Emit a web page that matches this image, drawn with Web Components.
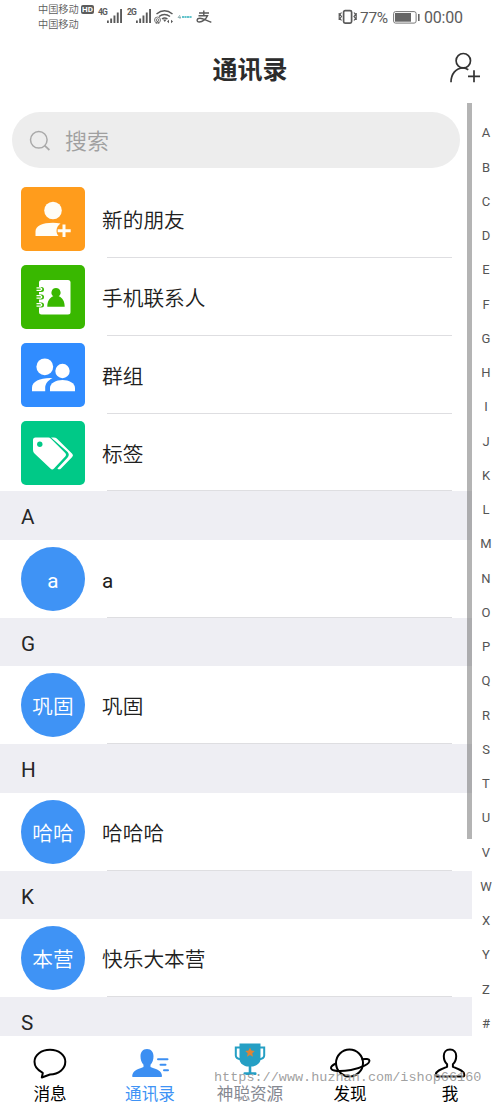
<!DOCTYPE html>
<html lang="zh-CN">
<head>
<meta charset="utf-8">
<title>通讯录</title>
<style>
html,body{margin:0;padding:0;background:#fff}
body{font-family:Roboto,"Noto Sans CJK SC",sans-serif;color:#262626}
</style>
</head>
<body>
<contacts-app></contacts-app>
<script>
const define = (name, html, setup) => {
  const template = document.createElement('template');
  template.innerHTML = html;
  customElements.define(name, class extends HTMLElement {
    connectedCallback() {
      if (this.shadowRoot) return;
      const root = this.attachShadow({ mode: 'open' });
      root.append(template.content.cloneNode(true));
      if (setup) setup(this, root);
    }
  });
};

/* name: [width, height, markup] */
const ICONS = {
  signal: [16, 15, '<g fill="#5a5a5a"><rect x="0" y="11.500" width="1.800" height="2.500"/><rect x="3.200" y="9.500" width="1.900" height="4.500"/><rect x="6.500" y="6.500" width="1.900" height="7.500"/><rect x="9.800" y="3.500" width="1.900" height="10.500"/><rect x="13.100" y="0" width="1.900" height="14"/></g>'],
  wifi: [20, 16, '<g fill="none" stroke="#5a5a5a" stroke-width="1.500"><path d="M2.500 5Q10.500-1.500 18.500 5"/><path d="M5 7.500Q10.500 3.300 16 7.500"/><path d="M8 10Q10.500 8 13.500 10"/><g stroke-width=".8"><circle cx="3.500" cy="11" r="3"/><circle cx="3.500" cy="11" r="1.300"/><path d="M2 15l1.500-3 1.500 3"/></g></g><path d="M9 10.500h3.500l-1.700 2.500z" fill="#5a5a5a"/><path d="M13 12.500l2-1.700v3.400zM19 12.500l-2-1.700v3.400z" fill="#5a5a5a"/>'],
  carrier: [16, 6, '<path d="M3 1L1 3.500h3M3 2v3" stroke="#86a8aa" fill="none" stroke-width=".8"/><path d="M5 3h10" stroke="#62c4cc" stroke-width="2.200" stroke-dasharray="2.100 .4"/>'],
  alipay: [16, 14, '<g fill="none" stroke="#5a5a5a" stroke-width="1.400"><path d="M3 3h10M7.800 .5v5M2.500 5.700h9C10 9 6.500 12 3.300 12 .2 12 .4 8.300 4 8.300c3.500 0 7 3 11.300 4"/></g>'],
  vibrate: [19, 16, '<g fill="none" stroke="#5a5a5a"><rect x="5.600" y="1.600" width="8" height="12.500" rx="1.500" stroke-width="1.700"/><path d="M3.500 3.500l-1.500 2 1.500 2-1.500 2 1.500 2M1.200 4v7M16 3.500l1.500 2-1.500 2 1.500 2-1.500 2M18.200 4v7" stroke-width="1.200"/></g>'],
  battery: [27, 13, '<rect x=".6" y=".6" width="22.500" height="11.500" rx="2" fill="none" stroke="#777"/><rect x="2" y="2" width="16" height="8.700" fill="#666"/><rect x="25" y="3" width="1.600" height="7" fill="#666"/>'],
  addUser: [32, 32, '<g fill="none" stroke="#333" stroke-width="1.700"><circle cx="14.300" cy="8.700" r="7.200"/><path d="M2 30.300c0-8 4.500-14.300 12.300-14.300q2.500 0 5 1.700M25 18.200v12M19 24.300h12"/></g>'],
  search: [22, 22, '<g fill="none" stroke="#a9a9a9" stroke-width="1.500"><circle cx="9.800" cy="9.800" r="8.300"/><path d="M15.700 15.700l4.700 4.300" stroke-width="1.700"/></g>'],
  friend: [64, 64, '<g fill="#fffdf6"><ellipse cx="32" cy="23.500" rx="8.800" ry="8.700"/><path d="M14.500 49v-4.500c0-6 7-8.800 17.500-8.800q3.500 0 7.500 .8c-5 3.500-4.800 9.500-2 12.500z"/><path d="M41.500 37.500h3v4.800h5.200v3h-5.200v4.800h-3v-4.800h-4.800v-3h4.800z"/></g>'],
  phonebook: [64, 64, '<rect x="18" y="15" width="31.500" height="34.500" rx="2.500" fill="#fff"/><g><rect x="13" y="22" width="10" height="5" rx="2.500" fill="#39b800"/><rect x="13" y="29.500" width="10" height="5" rx="2.500" fill="#39b800"/><rect x="13" y="37.500" width="10" height="5" rx="2.500" fill="#39b800"/><path d="M15.500 22.800h4q2.500 1.300 0 2.600h-4M15.500 30.600h4q2.500 1.300 0 2.600h-4M15.500 38.600h4q2.500 1.300 0 2.600h-4" fill="none" stroke="#fff" stroke-width="1.300"/></g><path d="M35 23a4.600 4.600 0 0 1 2.700 8.300c3.700 1.300 6 5 6 10.500H26.300c0-5.500 2.300-9.200 6-10.500A4.600 4.600 0 0 1 35 23z" fill="#39b800"/>'],
  group: [64, 64, '<g fill="#fff"><circle cx="23.800" cy="23.800" r="8.400"/><circle cx="41.500" cy="28" r="7.200"/><path d="M11 48.300v-3.500c0-6.300 8-9.800 18-9.800h2.500c-5 2.800-7.300 6-7.300 10v3.300z"/><path d="M29 48.300V45c0-5 6-8 12.500-8s12.500 3 12.500 8v3.300z"/></g>'],
  tags: [64, 64, '<g fill="#fff"><path d="M14.500 16.500H27.500q1.200 0 2.200 1L44 31.800q2 2 0 4L33 47.600q-1.800 1.700-3.600 0L13.500 32.500Q12 31 12 29v-10q0-2.500 2.500-2.500z"/><path d="M30 16.500h2.800q2 0 3 1L51.200 32.800q1.600 1.600 0 3.200L40 47.500q-1.800 1.700-3.600 0l10-10.800q2.700-3 .2-5.800z"/></g><circle cx="18.800" cy="23.200" r="2.700" fill="#00c987"/>'],
  message: [40, 36, '<path d="M12 27.300C7.500 25 4.500 21.300 4.500 16.800 4.500 9.800 11.300 4.800 20 4.800s15.300 5 15.300 12-6.500 12.700-15.300 12.700l-8.200 3 1-4.500z" fill="none" stroke="#000" stroke-width="2" stroke-linejoin="round"/>'],
  contacts: [40, 36, '<path d="M17 4c4.500 0 6.500 3.300 6.500 7.300 0 3.500-1 6.500-3 8.500v2.200c7 2.500 11.300 3.700 11.500 9 0 .7-.5 1-1.200 1H3.300c-.7 0-1.200-.3-1.100-1 .5-5.300 4.500-6.500 11.300-9v-2.200c-2-2-3-5-3-8.500C10.500 7.300 12.500 4 17 4z" fill="#3c8ff2"/><path d="M28 14.300h9.500M30.500 19.800h5M34 25.300h4" stroke="#3c8ff2" stroke-width="2" stroke-linecap="round"/>'],
  trophy: [40, 36, '<path d="M11 2.500H5.800v8c0 2.500 1.700 3.400 5.200 3.700M29 2.500h5.200v8c0 2.500-1.700 3.400-5.200 3.700" fill="none" stroke="#259fc4" stroke-width="2"/><path d="M9.500-1.500h21v16c0 3.800-4.500 6.300-7.500 7H17c-3-.7-7.500-3.200-7.500-7z" fill="#259fc4"/><path d="M18.700 20h2.600v8h-2.600z" fill="#259fc4"/><rect x="13.500" y="27.300" width="13" height="2.700" rx="1" fill="#259fc4"/><path d="M20 2.500l1.400 3.100 3.400.4-2.500 2.300.7 3.400-3-1.700-3 1.700.7-3.400L15.200 6l3.400-.4z" fill="#dd8437"/>'],
  planet: [44, 36, '<g fill="none" stroke="#000" stroke-width="2"><circle cx="21.500" cy="18" r="13.500"/><path d="M33.500 14.300c4.500-.8 7.700-.3 7.900 1.200.4 3.200-7.400 7.500-18.400 9.400-11 1.900-19.600 1.300-20-1.700-.2-1.700 1.600-3.200 5-4.700"/></g>'],
  me: [40, 36, '<path d="M20 4.500c4 0 6.200 2.800 6.200 6.500 0 3.700-1.300 6.500-3.300 8.300v2.500c6 2.400 10.800 4 11.300 7.500.3 1.700-.2 2.200-1.200 2.200H7c-1 0-1.500-.5-1.200-2.200.5-3.500 5.300-5.100 11.300-7.500v-2.500c-2-1.800-3.300-4.600-3.300-8.300 0-3.700 2.200-6.500 6.200-6.500z" fill="none" stroke="#000" stroke-width="2" stroke-linejoin="round"/>']
};

define('ui-icon', '<style>:host{display:block;flex:none}svg{display:block;overflow:visible}</style><div></div>', (host, root) => {
  const [w, h, body] = ICONS[host.getAttribute('name')];
  root.querySelector('div').innerHTML = `<svg width="${w}" height="${h}" viewBox="0 0 ${w} ${h}">${body}</svg>`;
});

define('status-bar', `<style>
:host{display:flex;height:34px;box-sizing:border-box;padding:0 37px 0 38px;color:#5c5c5c;align-items:flex-start}
.sim{display:grid;grid-template-rows:15px 15px;padding-top:2px;width:40px;font-size:10.200px;line-height:15px;white-space:nowrap;font-weight:350}
.hd{background:#5c5c5c;color:#fff;font:bold 8px/9px Roboto,sans-serif;width:13px;height:9px;border-radius:2px;text-align:center;margin:5px 0 0 3px}
.net{font:bold 8.500px/9px Roboto,sans-serif;letter-spacing:-.8px;margin:8px 0 0 4px;width:9px}
.n2{margin-left:4px}
.right{display:flex;margin-left:auto;font-size:16px;line-height:20px}
</style>
<div class="sim"><span>中国移动</span><span>中国移动</span></div><span class="hd">HD</span>
<span class="net">4G</span><ui-icon name="signal" style="margin-top:9px"></ui-icon>
<span class="net n2">2G</span><ui-icon name="signal" style="margin-top:9px"></ui-icon>
<ui-icon name="wifi" style="margin:9px 0 0 2px"></ui-icon><ui-icon name="carrier" style="margin:14px 0 0 3px"></ui-icon><ui-icon name="alipay" style="margin:10px 0 0 3px"></ui-icon>
<div class="right"><ui-icon name="vibrate" style="margin-top:9px"></ui-icon><span style="margin:8px 0 0 3px;width:29px;font-size:15.500px;letter-spacing:-.3px">77%</span><ui-icon name="battery" style="margin:11px 4px 0 4px"></ui-icon><span style="margin-top:8px;width:39px;letter-spacing:-.2px">00:00</span></div>`);

define('page-header', `<style>
:host{display:grid;grid-template-columns:1fr auto 1fr;height:69px;align-items:start;padding:0 19px}
h1{grid-column:2;margin:19px 0 0;font-size:25px;line-height:36px;font-weight:700;color:#2c2c2c}
ui-icon{justify-self:end;margin-top:18px}
</style><h1><slot></slot></h1><ui-icon name="addUser"></ui-icon>`);

define('search-field', `<style>
:host{display:flex;align-items:center;box-sizing:border-box;height:56px;margin:9px 12px 12.300px;padding:0 17px;border-radius:28px;background:#ededed;color:#a0a0a0;font-size:22px;line-height:32px;font-weight:350}
ui-icon{margin-top:2px}
span{margin:3px 0 0 14px}
</style><ui-icon name="search"></ui-icon><span><slot></slot></span>`);

define('contact-row', `<style>
:host{display:flex;height:77.800px;position:relative;box-sizing:border-box;padding:7px 20px 0 21px;background:linear-gradient(#dedee1,#dedee1) 107px 100%/345px 1px no-repeat}
.face{flex:none;width:64px;height:64px;border-radius:5px;background:var(--tile,#3f93f5);color:#fff;font-size:20.700px;line-height:68px;text-align:center}
.face.round{border-radius:50%}
.name{margin:18px 0 0 17px;font-size:20.700px;line-height:32px;color:#202020}
.cjk{font-weight:350}
</style><div class="face"></div><div class="name"><slot></slot></div>`, (host, root) => {
  const face = root.querySelector('.face');
  const name = root.querySelector('.name');
  if (/[\u4e00-\u9fff]/.test(host.textContent)) {
    name.classList.add('cjk');
    face.classList.add('cjk');
  }
  if (host.hasAttribute('icon')) {
    const icon = document.createElement('ui-icon');
    icon.setAttribute('name', host.getAttribute('icon'));
    face.append(icon);
  } else {
    face.classList.add('round');
    face.textContent = host.getAttribute('initials');
  }
});

define('section-title', `<style>
:host{display:block;box-sizing:border-box;height:48.600px;padding-left:21px;background:#eeeef3;font-size:20.700px;line-height:52px}
</style><slot></slot>`);

define('letter-index', `<style>
:host{display:grid;grid-auto-rows:34.250px;padding-top:12.400px;font-size:13px;line-height:35px;color:#555;text-align:center}
</style>`, (host, root) => {
  for (const c of 'ABCDEFGHIJKLMNOPQRSTUVWXYZ#') {
    const s = document.createElement('span');
    s.textContent = c;
    root.append(s);
  }
});

define('tab-item', `<style>
:host{display:flex;flex-direction:column;align-items:center;padding-top:9px;color:var(--ink,#000);font-size:16.600px;line-height:24px}
span{margin-top:2px;white-space:nowrap}
</style><div></div><span><slot></slot></span>`, (host, root) => {
  const icon = document.createElement('ui-icon');
  icon.setAttribute('name', host.getAttribute('icon'));
  root.querySelector('div').append(icon);
});

define('tab-bar', `<style>
:host{display:grid;grid-template-columns:repeat(5,1fr);height:75px;background:#fff}
</style><slot></slot>`);

define('site-mark', `<style>
:host{position:absolute;left:214px;top:1068px;font:13.500px/20px "Liberation Mono",monospace;color:rgba(135,135,135,.8);text-shadow:1px 0 0 rgba(255,255,255,.6);white-space:nowrap}
</style><slot></slot>`);

define('contacts-app', `<style>
:host{display:block;position:relative;width:500px;height:1111px;overflow:hidden;background:#fff}
.main{display:grid;grid-template-columns:472px 28px;height:933px}
.list{position:relative;overflow:hidden;height:933px}
.thumb{position:absolute;right:0;top:0;width:5.500px;height:735.500px;background:rgba(105,105,105,.5)}
</style>
<status-bar></status-bar>
<page-header>通讯录</page-header>
<div class="main"><div class="list">
<search-field>搜索</search-field>
<contact-row icon="friend" style="--tile:#ff9c1c">新的朋友</contact-row>
<contact-row icon="phonebook" style="--tile:#39b800">手机联系人</contact-row>
<contact-row icon="group" style="--tile:#308cff">群组</contact-row>
<contact-row icon="tags" style="--tile:#00c987">标签</contact-row>
<section-title>A</section-title><contact-row initials="a">a</contact-row>
<section-title>G</section-title><contact-row initials="巩固">巩固</contact-row>
<section-title>H</section-title><contact-row initials="哈哈">哈哈哈</contact-row>
<section-title>K</section-title><contact-row initials="本营">快乐大本营</contact-row>
<section-title>S</section-title>
<div class="thumb"></div>
</div><letter-index></letter-index></div>
<tab-bar>
<tab-item icon="message">消息</tab-item>
<tab-item icon="contacts" style="--ink:#3f93f5">通讯录</tab-item>
<tab-item icon="trophy" style="--ink:#858891">神聪资源</tab-item>
<tab-item icon="planet">发现</tab-item>
<tab-item icon="me">我</tab-item>
</tab-bar>
<site-mark>https://www.huzhan.com/ishop66160</site-mark>`);
</script>
</body>
</html>
